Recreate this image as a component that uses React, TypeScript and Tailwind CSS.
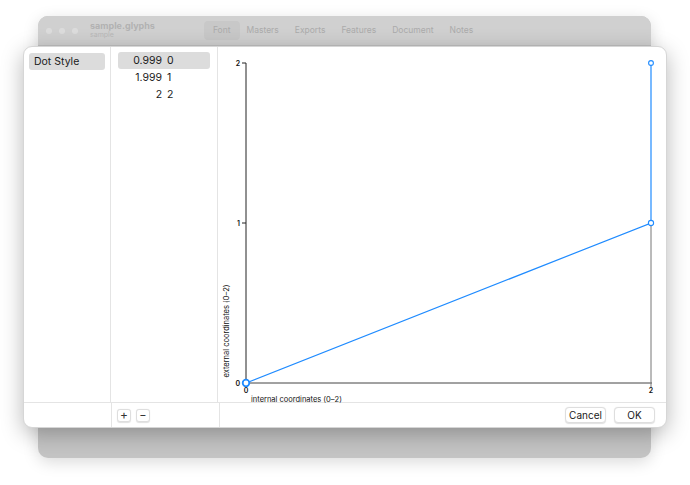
import React from "react";

export default function App() {
  const rows = [
    ["0.999", "0", true],
    ["1.999", "1", false],
    ["2", "2", false],
  ] as const;
  return (
    <div
      className="relative w-[690px] h-[485px] bg-white overflow-hidden"
      style={{ fontFamily: "Inter, 'Liberation Sans', sans-serif" }}
    >
      {/* background window */}
      <div className="absolute left-[38px] top-[16px] w-[613px] h-[442px] rounded-[10px] bg-[#c4c4c4] overflow-hidden shadow-[0_4px_16px_rgba(0,0,0,0.15)]">
        <div className="h-[30px] bg-[#d0d0d0] border-b border-[#c0c0c0] flex items-center">
          <div className="flex gap-[7px] ml-[8px]">
            <div className="w-[6px] h-[6px] rounded-full bg-[#dcdcdc]" />
            <div className="w-[6px] h-[6px] rounded-full bg-[#dcdcdc]" />
            <div className="w-[6px] h-[6px] rounded-full bg-[#dcdcdc]" />
          </div>
          <div className="ml-[12px] flex flex-col leading-none -mt-[2px]">
            <span className="text-[9px] font-bold text-[#b2b2b2]">sample.glyphs</span>
            <span className="text-[7px] text-[#b8b8b8] mt-[1px]">sample</span>
          </div>
          <div className="ml-[49px] flex items-center text-[8.5px] text-[#ababab]">
            <span className="px-[9px] py-[3px] rounded-[4px] bg-[#c8c8c8]">Font</span>
            <span className="ml-[7px]">Masters</span>
            <span className="ml-[16px]">Exports</span>
            <span className="ml-[16px]">Features</span>
            <span className="ml-[16px]">Document</span>
            <span className="ml-[16px]">Notes</span>
          </div>
        </div>
      </div>

      {/* dialog */}
      <div className="absolute left-[23px] top-[46px] w-[644px] h-[382px] rounded-[9px] bg-white shadow-[0_6px_22px_rgba(0,0,0,0.28)] border border-[#d6d6d6] flex flex-col overflow-hidden text-[#1a1a1a]">
        <div className="flex flex-1 min-h-0">
          <div className="w-[88px] border-r border-[#e4e4e4] pt-[6px] px-[5px]">
            <div className="h-[17px] rounded-[3px] bg-[#dcdcdc] text-[10.5px] flex items-center pl-[5px]">
              Dot Style
            </div>
          </div>
          <div className="w-[108px] border-r border-[#e4e4e4] pt-[5px] px-[7px] text-[10.5px]">
            {rows.map(([a, b, sel]) => (
              <div
                key={a}
                className={`h-[17px] rounded-[3px] flex items-center ${sel ? "bg-[#dcdcdc]" : ""}`}
              >
                <span className="w-[44px] text-right">{a}</span>
                <span className="ml-[5px]">{b}</span>
              </div>
            ))}
          </div>
          <div className="flex-1 relative">
            <svg width="448" height="357" className="block" style={{ fontFamily: "Inter, 'Liberation Sans', sans-serif" }}>
              {/* axes */}
              <line x1="28" y1="16" x2="28" y2="336" stroke="#222" strokeWidth="1" />
              <line x1="28" y1="336" x2="434" y2="336" stroke="#444" strokeWidth="1" />
              <line x1="433" y1="176" x2="433" y2="340" stroke="#777" strokeWidth="1" />
              <line x1="24" y1="16" x2="28" y2="16" stroke="#222" />
              <line x1="24" y1="176" x2="28" y2="176" stroke="#222" />
              <text x="22" y="19" fontSize="7" fontWeight="600" textAnchor="end" fill="#111">2</text>
              <text x="22" y="179" fontSize="7" fontWeight="600" textAnchor="end" fill="#111">1</text>
              <text x="22" y="339" fontSize="7" fontWeight="600" textAnchor="end" fill="#111">0</text>
              <text x="28" y="346" fontSize="7" fontWeight="600" textAnchor="middle" fill="#111">0</text>
              <text x="433" y="346" fontSize="7" fontWeight="600" textAnchor="middle" fill="#111">2</text>
              <text x="33" y="355" fontSize="7.5" fill="#111">internal coordinates (0–2)</text>
              <text
                x="0"
                y="0"
                fontSize="7.5"
                fill="#111"
                textAnchor="middle"
                transform="translate(11 284) rotate(-90)"
              >
                external coordinates (0–2)
              </text>
              {/* curve */}
              <polyline points="28,336 433,176 433,16" fill="none" stroke="#1f8bff" strokeWidth="1.2" />
              <circle cx="28" cy="336" r="3.3" fill="white" stroke="#1f8bff" strokeWidth="1.8" />
              <circle cx="433" cy="176" r="2.6" fill="white" stroke="#1f8bff" strokeWidth="1.1" />
              <circle cx="433" cy="16" r="2.4" fill="white" stroke="#1f8bff" strokeWidth="1.1" />
            </svg>
          </div>
        </div>
        <div className="h-[25px] border-t border-[#e4e4e4] flex items-center">
          <div className="w-[88px] h-full border-r border-[#e4e4e4]" />
          <div className="w-[108px] h-full border-r border-[#e4e4e4] flex items-center pl-[5px] gap-[5px]">
            <div className="w-[14px] h-[13px] rounded-[3px] border border-[#dedede] bg-white shadow-[0_0.5px_1px_rgba(0,0,0,0.12)] flex items-center justify-center text-[12px] leading-none text-[#333]">
              +
            </div>
            <div className="w-[14px] h-[13px] rounded-[3px] border border-[#dedede] bg-white shadow-[0_0.5px_1px_rgba(0,0,0,0.12)] flex items-center justify-center text-[11px] leading-none text-[#333]">
              −
            </div>
          </div>
          <div className="flex-1 flex justify-end items-center gap-[8px] pr-[11px]">
            <div className="w-[41px] h-[16px] rounded-[4px] border border-[#dedede] bg-white shadow-[0_0.5px_1px_rgba(0,0,0,0.12)] flex items-center justify-center text-[10px]">
              Cancel
            </div>
            <div className="w-[41px] h-[16px] rounded-[4px] border border-[#dedede] bg-white shadow-[0_0.5px_1px_rgba(0,0,0,0.12)] flex items-center justify-center text-[10px]">
              OK
            </div>
          </div>
        </div>
      </div>
    </div>
  );
}
